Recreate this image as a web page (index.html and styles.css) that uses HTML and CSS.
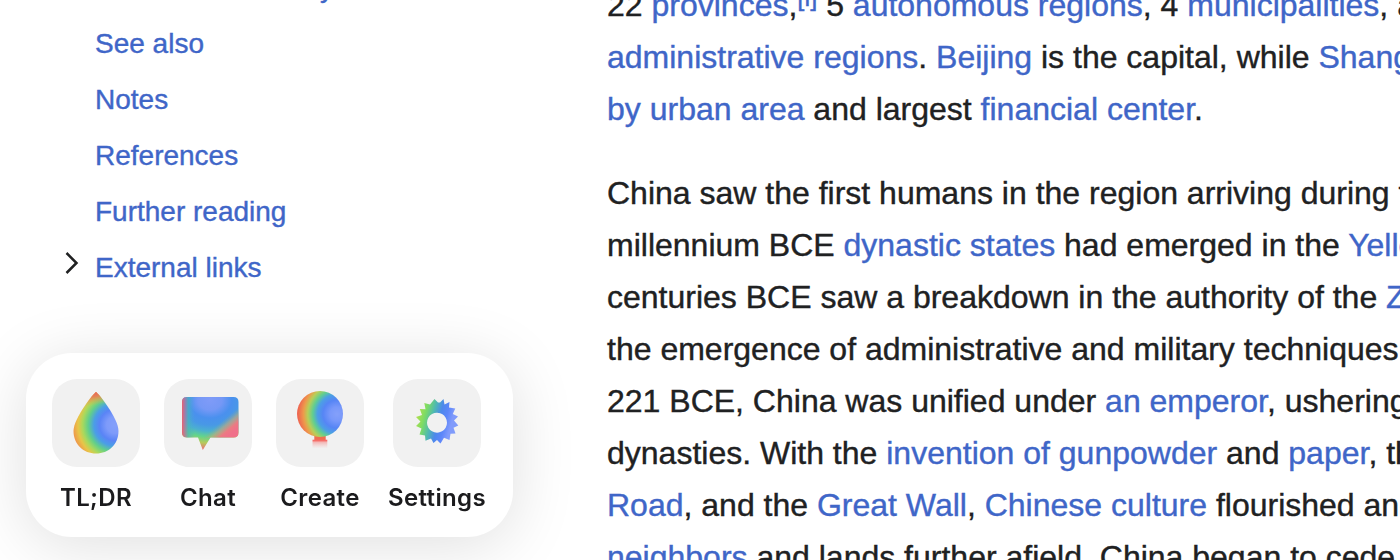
FILE: index.html
```html
<!DOCTYPE html>
<html lang="en">
<head>
<meta charset="utf-8">
<title>China</title>
<link rel="stylesheet" href="styles.css">
</head>
<body>
<div class="page">
  <aside class="sidebar">
    <ul class="toc">
      <li class="toc-item toc-clipped"><a>y</a></li>
      <li class="toc-item"><a>See also</a></li>
      <li class="toc-item"><a>Notes</a></li>
      <li class="toc-item"><a>References</a></li>
      <li class="toc-item"><a>Further reading</a></li>
      <li class="toc-item">
        <svg class="chevron" viewBox="0 0 14 24"><path d="M1.500 2 11.500 12 1.500 22" fill="none" stroke="#202122" stroke-width="2.5"/></svg>
        <a>External links</a>
      </li>
    </ul>
  </aside>
  <main class="article">
    <p>
      <span class="line">22 <a>provinces</a>,<sup><a>[i]</a></sup> 5 <a>autonomous regions</a>, 4 <a>municipalities</a>, and</span>
      <span class="line"><a>administrative regions</a>. <a>Beijing</a> is the capital, while <a>Shanghai</a></span>
      <span class="line"><a>by urban area</a> and largest <a>financial center</a>.</span>
    </p>
    <p>
      <span class="line">China saw the first humans in the region arriving during the</span>
      <span class="line">millennium BCE <a>dynastic states</a> had emerged in the <a>Yellow</a></span>
      <span class="line">centuries BCE saw a breakdown in the authority of the <a>Zhou</a></span>
      <span class="line">the emergence of administrative and military techniques,</span>
      <span class="line">221 BCE, China was unified under <a>an emperor</a>, ushering</span>
      <span class="line">dynasties. With the <a>invention of gunpowder</a> and <a>paper</a>, the</span>
      <span class="line"><a>Road</a>, and the <a>Great Wall</a>, <a>Chinese culture</a> flourished and</span>
      <span class="line"><a>neighbors</a> and lands further afield. China began to cede</span>
    </p>
  </main>
</div>

<nav class="dock">
  <div class="action">
    <span class="tile">
      <svg viewBox="0 0 88 88">
        <defs>
          <radialGradient id="drop" gradientUnits="userSpaceOnUse" cx="63" cy="46" r="42">
            <stop offset="0" stop-color="#84a0fa"/><stop offset=".2" stop-color="#7e9bfa"/><stop offset=".37" stop-color="#5a84f6"/><stop offset=".5" stop-color="#4a9ee6"/><stop offset=".64" stop-color="#62cf8a"/><stop offset=".77" stop-color="#a9d95c"/><stop offset=".88" stop-color="#e8c548"/><stop offset="1" stop-color="#ee9a4b"/>
          </radialGradient>
          <linearGradient id="drop-tip" gradientUnits="userSpaceOnUse" x1="42" y1="13" x2="44" y2="26">
            <stop offset="0" stop-color="#e8605c"/><stop offset=".35" stop-color="#e57c58" stop-opacity=".9"/><stop offset="1" stop-color="#d8b050" stop-opacity="0"/>
          </linearGradient>
        </defs>
        <path d="M44 13C45.500 13 66.500 39 66.500 52C66.500 65.500 56.500 74.500 44 74.500S21.500 65.500 21.500 52C21.500 39 42.500 13 44 13Z" fill="url(#drop)"/>
        <path d="M44 13C45.500 13 66.500 39 66.500 52C66.500 65.500 56.500 74.500 44 74.500S21.500 65.500 21.500 52C21.500 39 42.500 13 44 13Z" fill="url(#drop-tip)"/>
      </svg>
    </span>
    <span class="label">TL;DR</span>
  </div>
  <div class="action">
    <span class="tile">
      <svg viewBox="0 0 88 88">
        <defs>
          <radialGradient id="chat" gradientUnits="userSpaceOnUse" cx="46" cy="21" r="50" gradientTransform="translate(46 0) scale(1.2 1) translate(-46 0)">
            <stop offset="0" stop-color="#7f9bf8"/><stop offset=".2" stop-color="#7598f6"/><stop offset=".36" stop-color="#4a90ee"/><stop offset=".5" stop-color="#4898e6"/><stop offset=".62" stop-color="#4bb0d0"/><stop offset=".74" stop-color="#63d58a"/><stop offset=".86" stop-color="#b5cb5c"/><stop offset="1" stop-color="#f06a78"/>
          </radialGradient>
          <linearGradient id="chat-left" gradientUnits="userSpaceOnUse" x1="18" y1="0" x2="31" y2="0">
            <stop offset="0" stop-color="#ef5f70"/><stop offset=".25" stop-color="#a87aa2" stop-opacity=".8"/><stop offset=".5" stop-color="#48b4b8" stop-opacity=".65"/><stop offset="1" stop-color="#4ba0e0" stop-opacity="0"/>
          </linearGradient>
          <linearGradient id="chat-right" gradientUnits="userSpaceOnUse" x1="58" y1="42" x2="68" y2="54">
            <stop offset="0" stop-color="#8db08a" stop-opacity="0"/><stop offset=".35" stop-color="#c9a878" stop-opacity=".6"/><stop offset=".7" stop-color="#ec7a82"/><stop offset="1" stop-color="#f0708a"/>
          </linearGradient>
          <clipPath id="bubble"><path d="M23 18H69.500Q74.500 18 74.500 23V53.500Q74.500 58.500 69.500 58.500H46.500L38.800 71L34 58.500H23Q18 58.500 18 53.500V23Q18 18 23 18Z"/></clipPath>
        </defs>
        <g clip-path="url(#bubble)">
          <path d="M18 18H75V72H18Z" fill="url(#chat)"/>
          <path d="M18 18H75V59H18Z" fill="url(#chat-left)"/>
          <path d="M18 18H75V59H18Z" fill="url(#chat-right)"/>
        </g>
      </svg>
    </span>
    <span class="label">Chat</span>
  </div>
  <div class="action">
    <span class="tile">
      <svg viewBox="0 0 88 88">
        <defs>
          <radialGradient id="balloon" gradientUnits="userSpaceOnUse" cx="61" cy="35" r="39">
            <stop offset="0" stop-color="#84a0fa"/><stop offset=".18" stop-color="#7898fa"/><stop offset=".36" stop-color="#5685f5"/><stop offset=".5" stop-color="#4c9fe5"/><stop offset=".62" stop-color="#60ce91"/><stop offset=".75" stop-color="#b7cf58"/><stop offset=".86" stop-color="#ee9a4b"/><stop offset="1" stop-color="#ee6650"/>
          </radialGradient>
          <linearGradient id="fade" x1="0" y1="0" x2="0" y2="1"><stop offset="0" stop-color="#f48b89" stop-opacity=".6"/><stop offset="1" stop-color="#f8b0ae" stop-opacity="0"/></linearGradient>
        </defs>
        <path d="M38.300 55H49.700V61H38.300Z" fill="#ef6e50"/>
        <circle cx="44" cy="35" r="23" fill="url(#balloon)"/>
        <path d="M36.500 60.700H51.300V62.700H36.500Z" fill="#f66d68"/>
        <path d="M36.500 63H51.300V69.500H36.500Z" fill="url(#fade)"/>
      </svg>
    </span>
    <span class="label">Create</span>
  </div>
  <div class="action">
    <span class="tile">
      <svg viewBox="0 0 88 88">
        <defs><linearGradient id="gear" gradientUnits="userSpaceOnUse" x1="23" y1="37" x2="64" y2="48">
          <stop offset="0" stop-color="#b5e04b"/><stop offset=".2" stop-color="#7bdb66"/><stop offset=".38" stop-color="#4fb9b1"/><stop offset=".55" stop-color="#4d88ec"/><stop offset=".7" stop-color="#5c86fa"/><stop offset=".85" stop-color="#819bfb"/><stop offset="1" stop-color="#7e9bfa"/>
        </linearGradient></defs>
        <path fill-rule="evenodd" fill="url(#gear)" d="M41.500 20L45 23.500L47 23.500L50.500 20L51.500 25.500L56.500 23L56 28.500L62.300 29.500L59.800 35L65 37.500L61 41.500L65.300 46.500L60.500 48.800L62.500 54.500L57.500 54.800L56.500 61L51 58.800L47.500 64.500L44 61L40.500 64L38 59.500L32.500 61.800L32 56.500L26.500 55.500L28.500 49.500L23 47L27.500 42.500L23 38L29 36L26.800 30L32.500 30.200L31.300 24L37 25.500ZM44 33.700a10 10 0 1 0 .01 0Z"/>
      </svg>
    </span>
    <span class="label">Settings</span>
  </div>
</nav>
</body>
</html>
```
FILE: styles.css
```css
* { box-sizing: border-box; }
body {
  margin: 0;
  height: 560px;
  overflow: hidden;
  background: #fff;
  color: #202122;
  font-family: "Liberation Sans", Arial, sans-serif;
}
a { color: #3f66c8; text-decoration: none; }
.page {
  display: grid;
  grid-template-columns: 607px 793px;
  height: 560px;
  overflow: hidden;
  -webkit-text-stroke: .4px currentColor;
}
.toc { list-style: none; margin: -40px 0 0; padding: 0 0 0 95px; }
.toc-item { position: relative; height: 56px; font-size: 28px; line-height: 56px; }
.toc-clipped { padding-left: 225px; }
.chevron { position: absolute; left: -30px; top: 11px; width: 14px; height: 24px; }
.article { margin-top: -21px; font-size: 32px; line-height: 52px; min-width: 0; }
.article p { margin: 0 0 32px; }
.line { display: block; height: 52px; white-space: nowrap; }
sup { font-size: 25.6px; line-height: 1; vertical-align: 10px; }
.dock {
  position: fixed;
  left: 26px;
  top: 353px;
  width: 487px;
  height: 184px;
  display: flex;
  gap: 24px;
  padding: 26px 0 26px 26px;
  border-radius: 46px;
  background: #fff;
  box-shadow: 0 8px 64px rgba(0, 0, 0, .13);
}
.action { display: flex; flex-direction: column; align-items: center; gap: 16px; }
.tile { width: 88px; height: 88px; border-radius: 25px; background: #f1f1f1; }
.tile svg { display: block; width: 88px; height: 88px; }
.label { font: 600 24px/29px Inter, sans-serif; letter-spacing: .36px; color: #1b1b1d; }
```
